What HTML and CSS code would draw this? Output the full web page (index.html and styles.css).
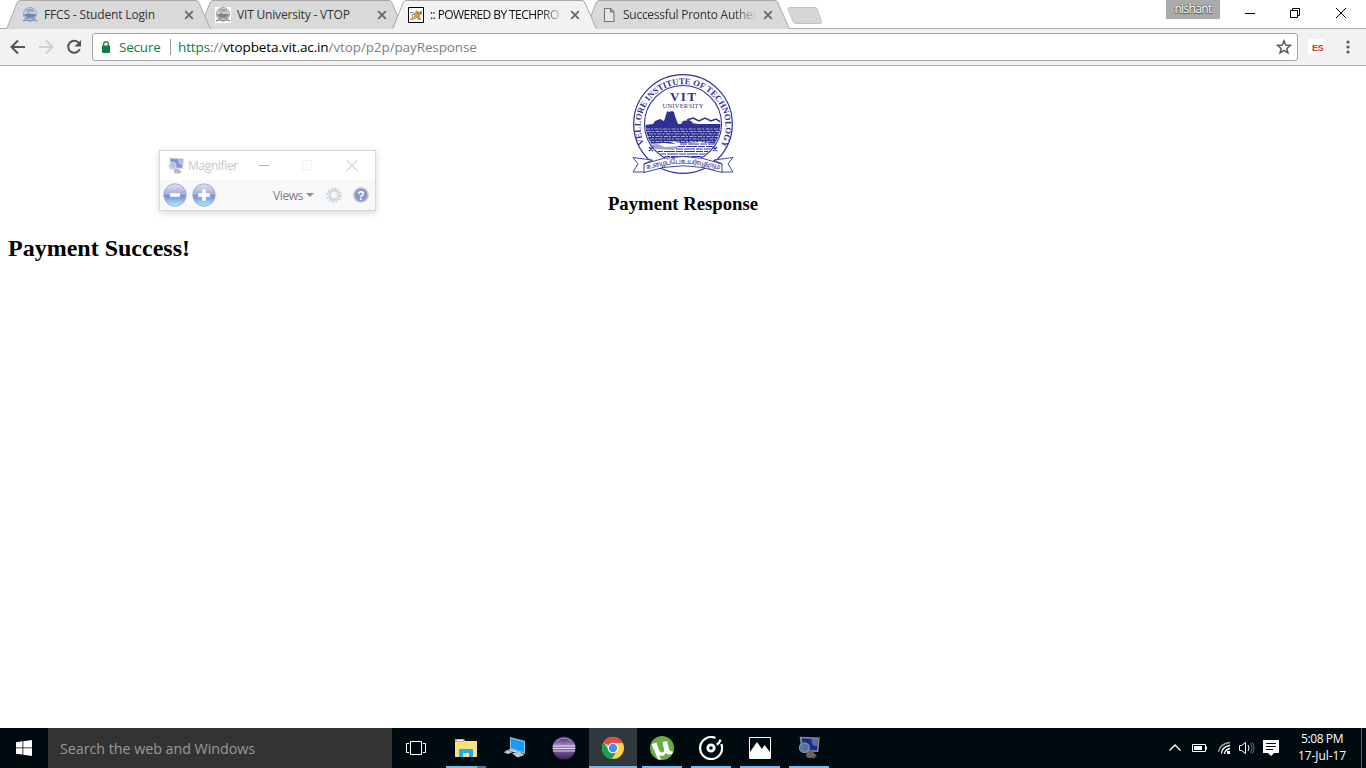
FILE: index.html
```html
<!DOCTYPE html>
<html lang="en">
<head>
<meta charset="utf-8">
<title>Payment Response</title>
<link rel="stylesheet" href="styles.css">
</head>
<body>
<svg class="defs" width="0" height="0" aria-hidden="true">
  <defs>
    <symbol id="tab-shape" viewBox="0 0 205 29">
      <path d="M0 28.5 L1 28 L11 3 Q12 .5 14 .5 H190 Q192 .5 193 3 L204 28 L205 28.5 V29 H0Z" fill="currentColor"/>
      <path d="M0 28.5 L1 28 L11 3 Q12 .5 14 .5 H190 Q192 .5 193 3 L204 28 L205 28.5" fill="none" stroke="#a9a9a9"/>
    </symbol>
    <symbol id="close" viewBox="0 0 10 10"><path d="M1.2 1.2 8.8 8.8M8.8 1.2 1.2 8.8" stroke="#666" stroke-width="1.7" fill="none"/></symbol>
    <symbol id="crest" viewBox="0 0 16 16">
      <circle cx="8" cy="7" r="6.6" fill="#c5cee2" stroke="#9aa8ca"/>
      <path d="M4 4h8M5 2.6h6" stroke="#8795b6"/><path d="M2.5 7h3l1-2 1 2h6v2q-5 3-11 0z" fill="#6f81ae"/>
      <path d="M3 11h10M1 14q3-2 7 0 4-2 7 0" stroke="#8595bd" stroke-width="1.6" fill="none"/>
    </symbol>
    <symbol id="magnifier" viewBox="0 0 18 18">
      <path d="M2 .5 17 1.200 16 12 3.500 11.500z" fill="#b9bdc4"/><path d="M3.500 1.700 15.800 2.300 15 10.800 4.500 10.300z" fill="#1c39b0"/>
      <path d="M10.500 2l5.300.3-.5 5.700-3.500-1z" fill="#6f8bea"/>
      <path d="M7 12h5l3 3q-4 2.500-8 1z" fill="#85898c"/>
      <path d="m8.500 11.500 4.500 5" stroke="#a27355" stroke-width="1.600"/>
      <circle cx="5.500" cy="8.800" r="3.600" fill="#7f9fd8" fill-opacity=".85" stroke="#aebccf"/>
    </symbol>
    <linearGradient id="orb" x2="0" y2="1"><stop stop-color="#e0e3f0"/><stop offset=".48" stop-color="#a3a9e2"/><stop offset=".52" stop-color="#7b86da"/><stop offset="1" stop-color="#a2f4ff"/></linearGradient>
    <linearGradient id="eclipse" x2="0" y2="1"><stop stop-color="#3f235b"/><stop offset=".4" stop-color="#a88ac8"/><stop offset=".65" stop-color="#735198"/><stop offset="1" stop-color="#3b2057"/></linearGradient>
  </defs>
</svg>

<header class="browser">
  <div class="tabstrip">
    <div class="tab">
      <svg class="tab-bg"><use href="#tab-shape"/></svg>
      <svg class="favicon"><use href="#crest"/></svg>
      <span class="tab-title t1">FFCS - Student Login</span>
      <svg class="tab-close"><use href="#close"/></svg>
    </div>
    <div class="tab tab-second">
      <svg class="tab-bg"><use href="#tab-shape"/></svg>
      <svg class="favicon favicon-white"><use href="#crest"/></svg>
      <span class="tab-title t2">VIT University - VTOP</span>
      <svg class="tab-close"><use href="#close"/></svg>
    </div>
    <div class="tab tab-active">
      <svg class="tab-bg"><use href="#tab-shape"/></svg>
      <svg class="favicon" viewBox="0 0 16 16"><path fill="#fff" stroke="#000" d="M.5.500h15v15H.500z"/><path d="M7 6l1-3 2 1.500h2L14 3v4l-2 1.500 1 4.500h-2L9 11l-4 2H2.500L6 10z" fill="#d3a044"/><path d="M2 6l3-1 2 2-3 1 1 2-3 3M9 10l3 3" stroke="#666" stroke-width=".8" fill="none"/><path d="M9.500 6h1M12 6h1" stroke="#222"/></svg>
      <span class="tab-title fade t3">:: POWERED BY TECHPRO</span>
      <svg class="tab-close"><use href="#close"/></svg>
    </div>
    <div class="tab tab-last">
      <svg class="tab-bg"><use href="#tab-shape"/></svg>
      <svg class="favicon" viewBox="0 0 16 16"><path d="M3.500 1.500h6l3.500 3.500v9.500H3.500zM9.500 1.500V5H13" fill="#e6e6e6" stroke="#757575" stroke-width="1.100"/></svg>
      <span class="tab-title fade t4">Successful Pronto Auther</span>
      <svg class="tab-close"><use href="#close"/></svg>
    </div>
    <svg class="new-tab" viewBox="0 0 36 18"><path d="M3 .5h25q1.500 0 2 1l4.500 13q.8 2-1 2H9q-2 0-2.700-1.500L1.200 2.500Q.7.500 3 .5z" fill="#d6d6d6" stroke="#c2c2c2"/></svg>
    <div class="window-controls">
      <span class="profile">nishant</span>
      <svg class="win-icons" viewBox="0 0 146 27"><path d="M25 13.500h10M70.500 10.500h7v7h-7zM72.500 10V8.500h7v7H78M116 8l10 10M126 8l-10 10" fill="none" stroke="#000"/></svg>
    </div>
  </div>
  <nav class="toolbar">
    <svg class="nav-icons" viewBox="0 0 92 36"><g fill="none" stroke-width="2"><path d="M25 18H12M18 11.500 11.500 18l6.500 6.500" stroke="#545454"/><path d="M39 18h13M46 11.500 52.500 18 46 24.500" stroke="#d0d0d0"/><path d="M79 14.200A6 6 0 1 0 79.800 20" stroke="#545454"/></g><path d="M81 11v6.500h-6.500z" fill="#545454"/></svg>
    <div class="omnibox">
      <svg class="lock" viewBox="0 0 8 12"><path d="M0 4.500h8V11q0 1-1 1H1q-1 0-1-1z" fill="#0b8043"/><path d="M1.700 5V3a2.300 2.300 0 0 1 4.600 0v2" fill="none" stroke="#0b8043" stroke-width="1.300"/></svg>
      <span class="secure">Secure</span>
      <span class="url"><span class="scheme">https</span>://<span class="host">vtopbeta.vit.ac.in</span>/vtop/p2p/payResponse</span>
      <svg class="star" viewBox="0 0 16 16"><path d="M8 1.800 9.700 6.100 14.300 6.400 10.800 9.400 11.900 13.900 8 11.400 4.100 13.900 5.200 9.400 1.700 6.400 6.300 6.100z" fill="none" stroke="#5a5a5a" stroke-width="1.500"/></svg>
    </div>
    <span class="extension">ES</span>
    <svg class="menu" viewBox="0 0 4 14"><g fill="#5a5a5a"><circle cx="2" cy="2" r="1.600"/><circle cx="2" cy="7" r="1.600"/><circle cx="2" cy="12" r="1.600"/></g></svg>
  </nav>
</header>

<main class="page">
  <svg class="logo" viewBox="0 0 102 102">
    <defs>
      <path id="ring" d="M14 74.500A42.500 42.500 0 1 1 88 74.500"/>
      <clipPath id="inner"><circle cx="51" cy="51" r="37.500"/></clipPath>
    </defs>
    <g fill="none" stroke="#2f3192"><circle cx="51" cy="51" r="49.300" stroke-width="1.200"/><circle cx="51" cy="51" r="38.500" stroke-width="1.100"/></g>
    <text class="ring-text"><textPath href="#ring" startOffset="4" textLength="171" lengthAdjust="spacingAndGlyphs">VELLORE INSTITUTE OF TECHNOLOGY</textPath></text>
    <text class="crest-vit" x="51" y="28" textLength="26" text-anchor="middle">VIT</text>
    <text class="crest-univ" x="51" y="35" textLength="41" text-anchor="middle">UNIVERSITY</text>
    <g clip-path="url(#inner)">
      <path d="M13 52l8-1 2-3 5-2 4 2 2-6 1-4 2 1 3-1 2 1 1 4 3 8h3l2-3 6-1 5 3 4 1h24v17l-5 5q-35 6-72 0z" fill="#2f3192"/>
      <path d="M55 47l6-2 6 3 6-3 6 3 5-2 5 3" fill="none" stroke="#2f3192" stroke-width="1.500"/>
      <path d="M60 50h29" stroke="#fff" stroke-width=".6"/>
      <g stroke="#fff" stroke-width=".6" stroke-dasharray="4 1 2 1.500"><path d="M14 56h74M15 58.500h72M17 61h70M15 63.500h72M18 66h67M15 68.500h71"/></g>
      <path d="M14 71l18-1 12 1-8-3 14 2 18-1 22 2-8 9-18 9H38L22 82z" fill="#fff"/>
      <g fill="none" stroke="#2f3192" stroke-width="1" stroke-dasharray="7 1 11 1"><path d="M48 71h40M46 73.500h38M44 76h38M24 78.500h54M27 81h48M31 83.500h40"/></g>
      <path d="M16 72l9-1 8 3 16-1-8 4-18-1z" fill="#2f3192" fill-opacity=".45"/>
    </g>
    <g stroke="#2f3192" stroke-width="1.500"><path d="M17 74l4 4M21 74l-4 4M81 74l4 4M85 74l-4 4"/></g>
    <g fill="#fff" stroke="#2f3192" stroke-width=".9">
      <path d="M1 84.500 20 87 12 99 1 99l5-8zM101 84.500 82 87l8 12h11l-5-8z"/>
      <path d="M12 91Q51 76 90 91V99.500Q51 86 12 99.500z"/>
      <path d="M12 91l8-4v1.500M90 91l-8-4v1.500" fill="none"/>
    </g>
    <path id="motto" d="M14 97Q51 84.500 88 97" fill="none"/>
    <text class="motto"><textPath href="#motto" startOffset="1" textLength="74">உழைப்பே உயர்வு தரும்</textPath></text>
  </svg>
  <h3 class="subtitle">Payment Response</h3>
  <h2 class="result">Payment Success!</h2>
</main>

<aside class="magnifier">
  <div class="mag-title">
    <svg class="mag-logo"><use href="#magnifier"/></svg>
    <span class="mag-name">Magnifier</span>
    <svg class="mag-controls" viewBox="0 0 100 12"><path d="M0 5.500h10" stroke="#b5b5b5"/><path d="M43.500.500h9v9h-9z" fill="none" stroke="#f0f0f0"/><path d="M88 .500l10 10M98 .500l-10 10" stroke="#b5b5b5"/></svg>
  </div>
  <div class="mag-tools">
    <svg class="mag-orbs" viewBox="0 0 54 24"><g fill="url(#orb)" stroke="#a4abd2"><circle cx="12" cy="12" r="11.200"/><circle cx="41" cy="12" r="11.200"/></g><path d="M7 10h10v4H7zM35 10h4V6h4v4h4v4h-4v4h-4v-4h-4z" fill="#fff" stroke="#b5bac8" stroke-width=".5"/></svg>
    <span class="mag-views">Views</span>
    <svg class="mag-arrow" viewBox="0 0 8 4"><path d="M0 0h8L4 4z" fill="#8396a3"/></svg>
    <svg class="mag-gear" viewBox="0 0 16 16"><circle cx="8" cy="8" r="6.800" fill="none" stroke="#c5d3df" stroke-width="1.800" stroke-dasharray="1.800 1.760"/><circle cx="8" cy="8" r="4.600" fill="#f8f8f8" stroke="#cddbe7" stroke-width="2.600"/></svg>
    <svg class="mag-help" viewBox="0 0 16 16"><circle cx="8" cy="8" r="7" fill="#8797d0" stroke="#c1c1c5" stroke-width="1.600"/><text class="help-mark" x="8" y="12.500" text-anchor="middle">?</text></svg>
  </div>
</aside>

<footer class="taskbar">
  <div class="start"><svg viewBox="0 0 16 16" width="16" height="16"><path d="M0 2.200 6.500 1.300V7.500H0zM7.300 1.200 16 0V7.500H7.300zM0 8.300h6.500v6.300L0 13.800zM7.300 8.300H16V16l-8.700-1.200z" fill="#fff"/></svg></div>
  <div class="search"><span class="search-text">Search the web and Windows</span></div>
  <div class="apps">
    <div class="app taskview"><svg viewBox="0 0 24 24"><path d="M6.500 5.500h11v13h-11zM5 7.500H2.500v9H5M19 7.500h2.500v9H19" fill="none" stroke="#fff"/></svg></div>
    <div class="app open stacked"><svg viewBox="0 0 24 24"><path d="M1 3h9l1 2h12v16H1z" fill="#ffe28c"/><path d="M1 3h9v3H1z" fill="#e9b83a"/><path d="M3 4h6v1H3z" fill="#fff"/><path d="M1 6h22v14H1z" fill="#fddf80"/><path d="M5 21v-8h14v8h-4v-4H9v4z" fill="#1eafe8"/></svg></div>
    <div class="app"><svg viewBox="0 0 24 24"><path d="M7 1 22 5v13L7 13z" fill="#85c9ef"/><path d="M8 2.500 21 6v10.500L8 12z" fill="#199bf1"/><path d="M4 14 10 16l-5 2-4-1.500zM9 17.500l7-2 5.500 3.500-7 2.500z" fill="#c2c7c9"/><path d="M7 13l8 2.500-3 1L5 14z" fill="#dfe3e5"/></svg></div>
    <div class="app"><svg viewBox="0 0 24 24"><circle cx="12" cy="12" r="11.500" fill="url(#eclipse)"/><path d="M1 10h22M1 12.500h22M1 15h22" stroke="#e2d8ec" stroke-width="1"/><path d="M5 5q7-6 14 0" stroke="#b49aca" fill="none"/></svg></div>
    <div class="app current"><svg viewBox="0 0 24 24"><circle cx="12" cy="12" r="11" fill="#ffd348"/><path d="M12 12 2.500 6.500A11 11 0 0 1 22 7H12z" fill="#dc5044"/><path d="M2.500 6.500A11 11 0 0 0 11 23l5-8.500-4-2.500-4 2z" fill="#159f5c"/><circle cx="12" cy="12" r="5.300" fill="#fff"/><circle cx="12" cy="12" r="4.200" fill="#4a8bf4"/></svg></div>
    <div class="app open"><svg viewBox="0 0 24 24"><circle cx="12" cy="12" r="12" fill="#68b044"/><path d="M1.500 8 6.500 6.500 9 14q1.500 3 3.500 2.500t1.500-3.500L12.500 6l4.500-1 2 8q.8 3 4 2.500l-1 2.500q-4 1.500-6-1-1.500 3-4 3-2 0-3-1l2 4.500H8z" fill="#fff"/></svg></div>
    <div class="app open"><svg viewBox="0 0 24 24"><path d="M16.500 2A11 11 0 1 0 22.300 8M17.500 8.500q3-1 4-5" fill="none" stroke="#fff" stroke-width="2.200"/><circle cx="12" cy="12" r="3.200" fill="none" stroke="#fff" stroke-width="2.800"/></svg></div>
    <div class="app open"><svg viewBox="0 0 24 24"><path d="M1.500 1.500h21v21h-21z" fill="#000b0f" stroke="#fff"/><path d="M2 16l7-10 5 7 2.500-4 5.500 7v6H2z" fill="#fff"/></svg></div>
    <div class="app open dim"><svg viewBox="0 0 24 24"><use href="#magnifier" width="24" height="24"/></svg></div>
  </div>
  <div class="tray">
    <svg class="tray-icons" viewBox="0 0 112 24"><g fill="none" stroke="#fff">
      <path d="M1.500 14.500 7 9l5.500 5.500" stroke-width="1.300"/>
      <path d="M24.500 8.500h13v7h-13zM38.500 10.500v3"/>
      <path d="M26 10h8v4h-8z" fill="#fff" stroke="none"/>
      <g stroke-width="1.300"><path d="M50.500 16Q52 7.500 62 6.500" opacity=".65"/><path d="M53.500 17.500Q54 10.500 62 9.500M56.500 18Q57 13.500 62 12.500"/></g>
      <path d="M59 15h3v3h-3z" fill="#fff" stroke="none"/>
      <path d="M71.500 9.500h2l4-3v11l-4-3h-2z"/><path d="M80 9q2 3 0 6"/><path d="M82 7q4 5 0 10M84 6q4 6 0 12" opacity=".4"/>
      <path d="M95 4h16v13h-5l-3 3-3-3h-5z" fill="#fff" stroke="none"/><path d="M98 7.500h10M98 10.500h10M98 13.500h7" stroke="#000b0f"/>
    </g></svg>
    <div class="clock"><span class="time">5:08 PM</span><span class="date">17-Jul-17</span></div>
    <div class="show-desktop"></div>
  </div>
</footer>
</body>
</html>
```
FILE: styles.css
```css
* { box-sizing: border-box; }
body {
  margin: 0;
  width: 1366px;
  height: 768px;
  overflow: hidden;
  display: flex;
  flex-direction: column;
  background: #fff;
  font-family: "Open Sans", "Noto Sans", sans-serif;
}
svg { display: block; flex: none; }
span { white-space: nowrap; }
.defs { position: absolute; }

.browser { flex: none; }
.tabstrip {
  display: flex;
  height: 29px;
  padding-left: 6px;
  border-bottom: 1px solid #ababab;
}
.tab {
  position: relative;
  z-index: 3;
  display: flex;
  align-items: center;
  flex: none;
  width: 205px;
  height: 29px;
  margin-right: -12px;
  padding: 1px 0 0 16px;
  color: #d9d9d9;
}
.tab-second { z-index: 2; }
.tab-active { z-index: 4; color: #f2f2f2; }
.tab-active::after {
  content: "";
  position: absolute;
  left: 1px;
  right: 1px;
  bottom: 0;
  height: 1px;
  background: #f2f2f2;
}
.tab-last { z-index: 1; }
.tab-bg { position: absolute; left: 0; top: 0; width: 205px; height: 29px; }
.favicon { position: relative; width: 16px; height: 16px; }
.favicon-white { background: #fff; filter: grayscale(.7); }
.tab-title {
  position: relative;
  width: 133px;
  margin: 0 6px;
  color: #333;
  font-size: 12px;
  line-height: 18px;
}
.tab-active .tab-title { color: #111; }
.fade { mask-image: linear-gradient(to right, #000 110px, transparent 135px); }
.t1 { letter-spacing: -.16px; }
.t2 { letter-spacing: -.18px; }
.t3 { letter-spacing: -.58px; }
.t4 { letter-spacing: -.27px; }
.tab-close { position: relative; width: 10px; height: 10px; margin-left: 1px; }
.new-tab { width: 36px; height: 18px; margin: 7px 0 0 9px; }
.window-controls { display: flex; margin-left: auto; }
.profile {
  width: 54px;
  height: 19px;
  background: #aaa;
  color: #fff;
  font-size: 12px;
  line-height: 18px;
  letter-spacing: -.65px;
  text-align: center;
  text-shadow: 0 0 2px #333, 0 1px 1px #555;
}
.win-icons { width: 146px; height: 27px; }
.toolbar {
  display: flex;
  align-items: center;
  height: 37px;
  background: #f2f2f2;
  border-bottom: 1px solid #b0b0b0;
}
.nav-icons { width: 92px; height: 36px; }
.omnibox {
  display: flex;
  align-items: center;
  width: 1206px;
  height: 28px;
  padding: 0 5px 0 9px;
  background: #fff;
  border: 1px solid #a6a6a6;
  border-radius: 3px;
  font-size: 14px;
}
.lock { width: 8px; height: 12px; }
.secure {
  width: 52px;
  margin-left: 9px;
  border-right: 1px solid #999;
  color: #0b8043;
  font-size: 13.5px;
  line-height: 16px;
  letter-spacing: -.2px;
}
.url { margin-left: 7px; color: #808080; font-size: 13.5px; letter-spacing: -.11px; }
.scheme { color: #0b8043; }
.host { color: #000; }
.star { width: 16px; height: 16px; margin-left: auto; }
.extension {
  width: 16px;
  height: 16px;
  margin-left: 10px;
  padding-left: 4px;
  background: #fff;
  color: #e8292b;
  font: bold 9px/19px "Liberation Sans", sans-serif;
  letter-spacing: -.3px;
}
.menu { width: 4px; height: 14px; margin-left: 22px; }

.page {
  flex: 1;
  padding: 8px;
  font-family: "Liberation Serif", "Times New Roman", serif;
  color: #000;
}
.logo { width: 102px; height: 102px; margin: -1px auto 0; }
.ring-text { fill: #2f3192; font: bold 8.6px "Liberation Serif", serif; }
.crest-vit { fill: #2f3192; font: bold 13px "Liberation Serif", serif; }
.crest-univ { fill: #2f3192; font: 6.5px/1 "Liberation Serif", serif; }
.motto { fill: #2f3192; font: 7px "Noto Sans Tamil", "Noto Sans", sans-serif; }
.subtitle { margin: 18px 0 20px; font-size: 18.72px; line-height: 22px; text-align: center; }
.result { margin: 0; font-size: 24px; line-height: 27px; }

.magnifier {
  position: absolute;
  left: 159px;
  top: 150px;
  width: 217px;
  height: 61px;
  border: 1px solid #d8d8d8;
  background: #fff;
  box-shadow: 0 2px 7px rgba(0, 0, 0, .16);
}
.mag-title { display: flex; align-items: center; height: 29px; padding-left: 7px; }
.mag-logo { width: 18px; height: 18px; opacity: .55; }
.mag-name { width: 50px; margin: 0 21px 0 3px; color: #c7c7c7; font-size: 12px; letter-spacing: -.35px; }
.mag-controls { width: 100px; height: 12px; }
.mag-tools { display: flex; align-items: center; height: 30px; padding-left: 3px; background: #f8f8f8; }
.mag-orbs { width: 54px; height: 24px; }
.mag-views { width: 31px; margin-left: 56px; color: #7c7c7c; font-size: 12px; letter-spacing: -.4px; }
.mag-arrow { width: 8px; height: 4px; margin-left: 2px; }
.mag-gear { width: 16px; height: 16px; margin-left: 12px; }
.mag-help { width: 16px; height: 16px; margin-left: 11px; }
.help-mark { fill: #fff; font: bold 12px "Liberation Sans", sans-serif; }

.taskbar { display: flex; flex: none; height: 40px; background: #000b0f; color: #fff; }
.start { display: flex; align-items: center; justify-content: center; width: 48px; }
.search { display: flex; align-items: center; width: 344px; padding-left: 12px; background: #333; }
.search-text { color: #999; font-size: 14.3px; letter-spacing: -.04px; }
.apps { display: flex; gap: 1px; }
.app {
  display: flex;
  align-items: center;
  justify-content: center;
  width: 48px;
  height: 40px;
}
.app svg { width: 24px; height: 24px; }
.taskview { margin-right: 1px; }
.open { background: linear-gradient(#76b9ed, #76b9ed) 4px 38px / 40px 2px no-repeat; }
.stacked { background: linear-gradient(to right, #76b9ed 31px, #4b789f 31px) 4px 38px / 40px 2px no-repeat; }
.current { background: linear-gradient(#32393d 38px, #76b9ed 38px); }
.dim svg { opacity: .75; }
.tray { display: flex; align-items: center; margin-left: auto; }
.tray-icons { width: 112px; height: 24px; }
.clock {
  display: flex;
  flex-direction: column;
  align-items: center;
  width: 78px;
  margin-left: 3px;
  font-size: 12px;
  line-height: 17px;
  letter-spacing: -.4px;
  padding-bottom: 2px;
}
.date { letter-spacing: -.1px; }
.show-desktop { width: 5px; height: 40px; border-left: 1px solid #60676a; }
```
